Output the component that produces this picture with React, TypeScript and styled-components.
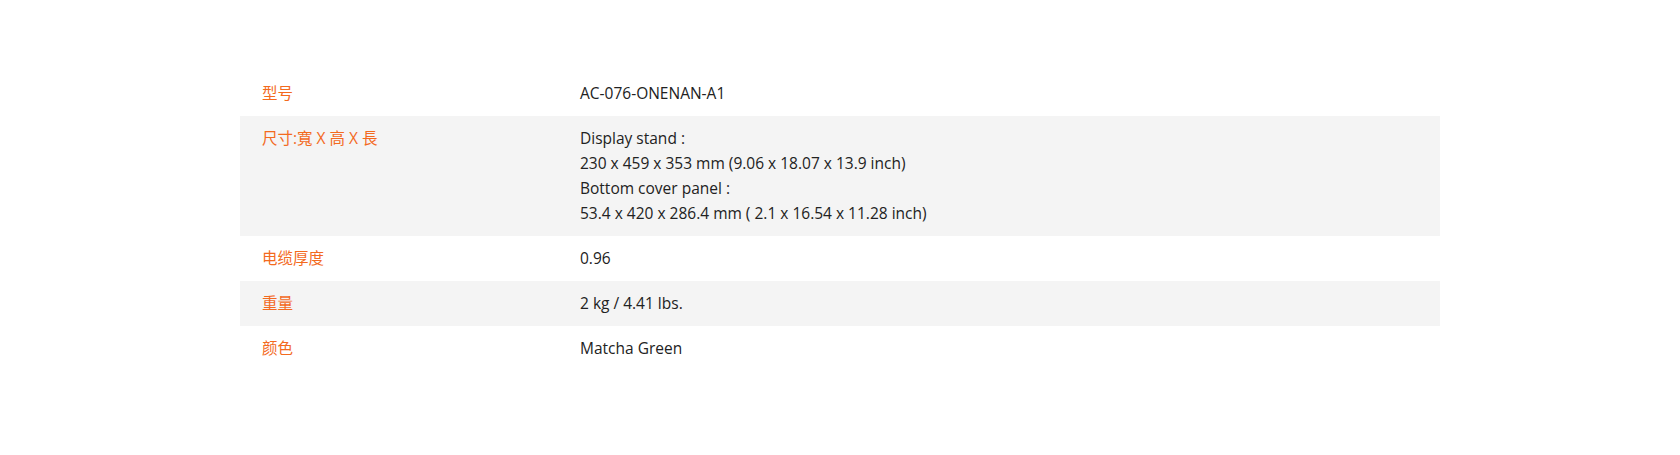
import styled, {createGlobalStyle} from "styled-components";

const GlobalStyle = createGlobalStyle`
  body {
    margin: 0;
    background: #ffffff;
    font-family: "Open Sans", "Noto Sans CJK SC", sans-serif;
  }
`;

interface ISpec {
    label: string;
    value: string[];
}

const specs: ISpec[] = [
    {label: "型号", value: ["AC-076-ONENAN-A1"]},
    {
        label: "尺寸:寬 X 高 X 長",
        value: [
            "Display stand :",
            "230 x 459 x 353 mm (9.06 x 18.07 x 13.9 inch)",
            "Bottom cover panel :",
            "53.4 x 420 x 286.4 mm ( 2.1 x 16.54 x 11.28 inch)",
        ],
    },
    {label: "电缆厚度", value: ["0.96"]},
    {label: "重量", value: ["2 kg / 4.41 lbs."]},
    {label: "颜色", value: ["Matcha Green"]},
];

export default function App() {
    return (
        <Page>
            <GlobalStyle/>
            <Table>
                {specs.map((spec, i) => (
                    <Row key={spec.label} $striped={i % 2 === 1}>
                        <Label>{spec.label}</Label>
                        <Value>
                            {spec.value.map((line) => (
                                <Line key={line}>{line}</Line>
                            ))}
                        </Value>
                    </Row>
                ))}
            </Table>
        </Page>
    );
}

const Page = styled.div`
  width: 100%;
  height: 455px;
  padding-top: 71px;
  box-sizing: border-box;
  display: flex;
  justify-content: center;
`;

const Table = styled.div`
  width: 1200px;
  display: flex;
  flex-direction: column;
`;

const Row = styled.div<{ $striped: boolean }>`
  display: grid;
  grid-template-columns: 340px 1fr;
  padding: 10px 0;
  background: ${(props) => (props.$striped ? "#f4f4f4" : "#ffffff")};
`;

const Label = styled.div`
  padding-left: 22px;
  color: #f36a1e;
  font-size: 15.5px;
  line-height: 25px;
`;

const Value = styled.div`
  display: flex;
  flex-direction: column;
  color: #222222;
  font-size: 15.5px;
`;

const Line = styled.span`
  line-height: 25px;
`;
